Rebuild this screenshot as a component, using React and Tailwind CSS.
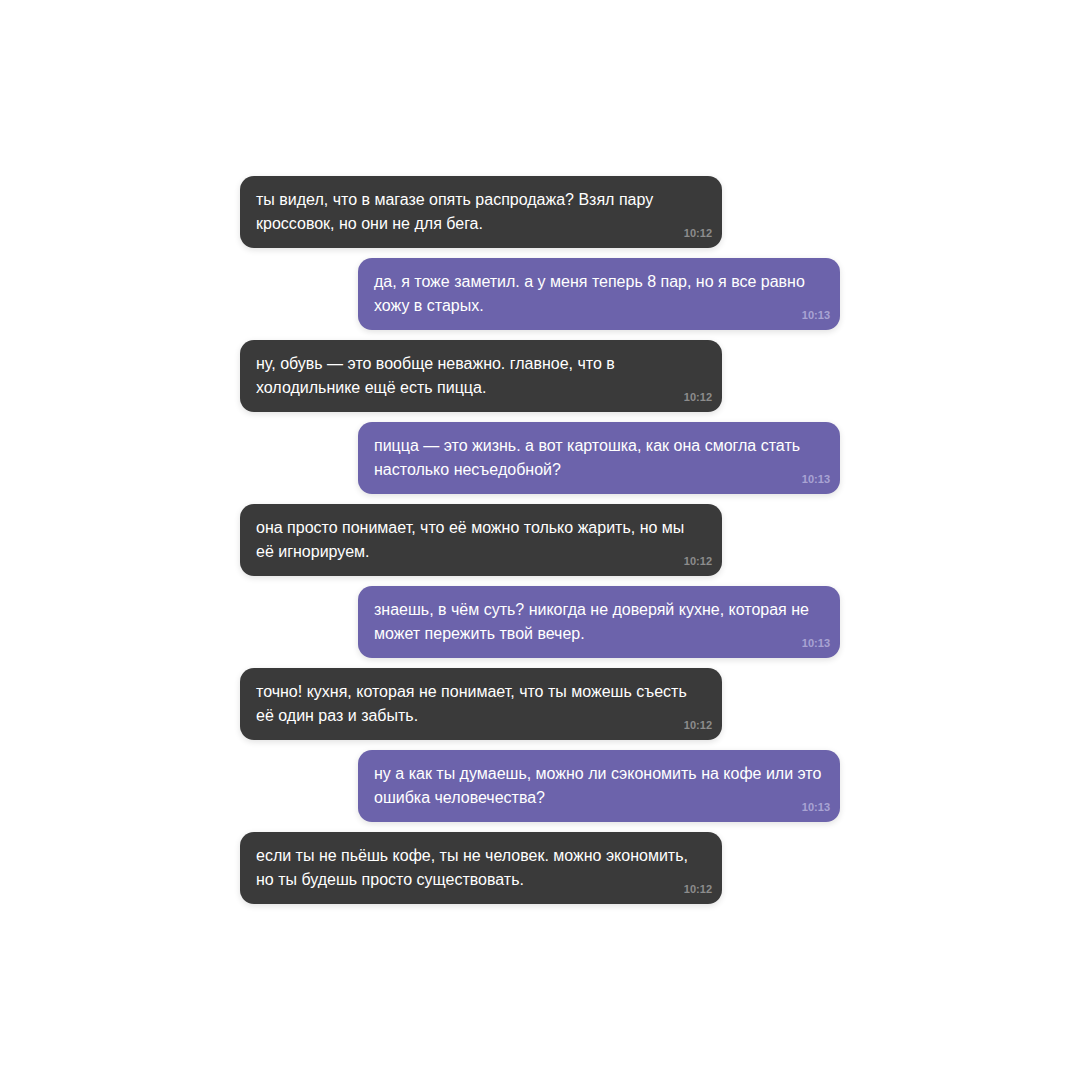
import React from 'react'

const messages = [
  { mine: false, text: 'ты видел, что в магазе опять распродажа? Взял пару кроссовок, но они не для бега.', time: '10:12' },
  { mine: true, text: 'да, я тоже заметил. а у меня теперь 8 пар, но я все равно хожу в старых.', time: '10:13' },
  { mine: false, text: 'ну, обувь — это вообще неважно. главное, что в холодильнике ещё есть пицца.', time: '10:12' },
  { mine: true, text: 'пицца — это жизнь. а вот картошка, как она смогла стать настолько несъедобной?', time: '10:13' },
  { mine: false, text: 'она просто понимает, что её можно только жарить, но мы её игнорируем.', time: '10:12' },
  { mine: true, text: 'знаешь, в чём суть? никогда не доверяй кухне, которая не может пережить твой вечер.', time: '10:13' },
  { mine: false, text: 'точно! кухня, которая не понимает, что ты можешь съесть её один раз и забыть.', time: '10:12' },
  { mine: true, text: 'ну а как ты думаешь, можно ли сэкономить на кофе или это ошибка человечества?', time: '10:13' },
  { mine: false, text: 'если ты не пьёшь кофе, ты не человек. можно экономить, но ты будешь просто существовать.', time: '10:12' },
]

function Bubble({ mine, text, time }) {
  return (
    <div className={mine ? 'flex justify-end' : 'flex justify-start'}>
      <div
        className={
          'relative w-[482px] h-[72px] rounded-[14px] pl-4 pr-4 pt-3 text-[16px] leading-6 text-white shadow-[0_2px_6px_rgba(0,0,0,0.12)] ' +
          (mine ? 'bg-[#6c63ab]' : 'bg-[#3a3a3a]')
        }
      >
        <p>{text}</p>
        {/* time stamp sits in the bottom-right corner */}
        <span
          className={
            'absolute right-[10px] bottom-[9px] text-[11px] font-bold leading-none ' +
            (mine ? 'text-[#a9a3d3]' : 'text-[#8c8c8c]')
          }
        >
          {time}
        </span>
      </div>
    </div>
  )
}

export default function App() {
  return (
    <div className="min-h-[1080px] bg-white flex items-center justify-center font-['Liberation_Sans',Arial,sans-serif]">
      <div className="w-[600px] flex flex-col gap-[10px]">
        {messages.map((m, i) => (
          <Bubble key={i} {...m} />
        ))}
      </div>
    </div>
  )
}
